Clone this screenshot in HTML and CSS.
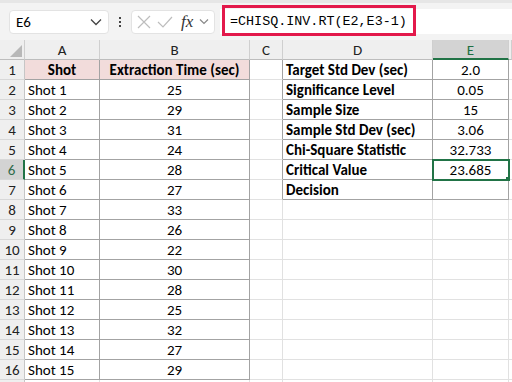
FILE: index.html
```html
<!DOCTYPE html>
<html lang="en">
<head>
<meta charset="utf-8">
<title>Chi-Square Test</title>
<link rel="stylesheet" href="styles.css">
</head>
<body>
  <div class="bar">
    <div class="namebox">
      <span>E6</span>
      <svg class="chev" width="12" height="8" viewBox="0 0 12 8"><path d="M1 1.5 L6 6.5 L11 1.5" fill="none" stroke="#444" stroke-width="1.3"/></svg>
    </div>
    <div class="dots"><i></i><i></i><i></i></div>
    <div class="fxbox">
      <svg width="14" height="14" viewBox="0 0 14 14"><path d="M1 1 L13 13 M13 1 L1 13" stroke="#bdbdbd" stroke-width="1.2"/></svg>
      <svg width="16" height="14" viewBox="0 0 16 14"><path d="M1 7 L6 12 L15 2" fill="none" stroke="#bdbdbd" stroke-width="1.2"/></svg>
      <span class="fx">fx</span>
      <svg width="10" height="7" viewBox="0 0 10 7"><path d="M1 1.5 L5 5.5 L9 1.5" fill="none" stroke="#888" stroke-width="1.2"/></svg>
    </div>
    <div class="formula">
      <span class="ftext">=CHISQ.INV.RT(E2,E3-1)</span>
      <div class="mark"></div>
    </div>
  </div>

  <div class="sheet">
    <div class="h corner"><svg width="12" height="12" viewBox="0 0 12 12"><path d="M12 0 L12 12 L0 12 Z" fill="#b8b8b8"/></svg></div>
    <div class="h">A</div><div class="h">B</div><div class="h">C</div><div class="h">D</div><div class="h sel">E</div><div class="h"></div>

    <div class="r">1</div><div class="c t th">Shot</div><div class="c t th">Extraction Time (sec)</div><div class="c l"></div><div class="c t lb">Target Std Dev (sec)</div><div class="c t mid">2.0</div><div class="c"></div>
    <div class="r">2</div><div class="c t">Shot 1</div><div class="c t mid">25</div><div class="c l"></div><div class="c t lb">Significance Level</div><div class="c t mid">0.05</div><div class="c"></div>
    <div class="r">3</div><div class="c t">Shot 2</div><div class="c t mid">29</div><div class="c l"></div><div class="c t lb">Sample Size</div><div class="c t mid">15</div><div class="c"></div>
    <div class="r">4</div><div class="c t">Shot 3</div><div class="c t mid">31</div><div class="c l"></div><div class="c t lb">Sample Std Dev (sec)</div><div class="c t mid">3.06</div><div class="c"></div>
    <div class="r">5</div><div class="c t">Shot 4</div><div class="c t mid">24</div><div class="c l"></div><div class="c t lb">Chi-Square Statistic</div><div class="c t mid">32.733</div><div class="c"></div>
    <div class="r sel">6</div><div class="c t">Shot 5</div><div class="c t mid">28</div><div class="c l"></div><div class="c t lb">Critical Value</div><div class="c t mid active">23.685</div><div class="c"></div>
    <div class="r">7</div><div class="c t">Shot 6</div><div class="c t mid">27</div><div class="c l"></div><div class="c t lb">Decision</div><div class="c t mid"></div><div class="c"></div>
    <div class="r">8</div><div class="c t">Shot 7</div><div class="c t mid">33</div><div class="c"></div><div class="c"></div><div class="c"></div><div class="c"></div>
    <div class="r">9</div><div class="c t">Shot 8</div><div class="c t mid">26</div><div class="c"></div><div class="c"></div><div class="c"></div><div class="c"></div>
    <div class="r">10</div><div class="c t">Shot 9</div><div class="c t mid">22</div><div class="c"></div><div class="c"></div><div class="c"></div><div class="c"></div>
    <div class="r">11</div><div class="c t">Shot 10</div><div class="c t mid">30</div><div class="c"></div><div class="c"></div><div class="c"></div><div class="c"></div>
    <div class="r">12</div><div class="c t">Shot 11</div><div class="c t mid">28</div><div class="c"></div><div class="c"></div><div class="c"></div><div class="c"></div>
    <div class="r">13</div><div class="c t">Shot 12</div><div class="c t mid">25</div><div class="c"></div><div class="c"></div><div class="c"></div><div class="c"></div>
    <div class="r">14</div><div class="c t">Shot 13</div><div class="c t mid">32</div><div class="c"></div><div class="c"></div><div class="c"></div><div class="c"></div>
    <div class="r">15</div><div class="c t">Shot 14</div><div class="c t mid">27</div><div class="c"></div><div class="c"></div><div class="c"></div><div class="c"></div>
    <div class="r">16</div><div class="c t">Shot 15</div><div class="c t mid">29</div><div class="c"></div><div class="c"></div><div class="c"></div><div class="c"></div>
    <div class="r"></div><div class="c"></div><div class="c"></div><div class="c"></div><div class="c"></div><div class="c"></div><div class="c"></div>
  </div>
</body>
</html>
```

FILE: styles.css
```css
*{
    margin:0;
    padding:0;
    box-sizing:border-box;
}
body{
    background:#fff;
    color:#000;
    font-family:Carlito, "Liberation Sans", Arial, sans-serif;
    font-size:15px;
    width:512px;
    height:382px;
    overflow:hidden;
}
.bar{
    height:40px;
    background:#f3f3f3;
    border-top:3px solid #e6e6e6;
    display:flex;
    align-items:center;
    padding-left:9px;
}
.namebox{
    width:100px;
    height:24px;
    background:#fff;
    border:1px solid #e3e3e3;
    border-radius:4px;
    display:flex;
    align-items:center;
    justify-content:space-between;
    padding:0 6px 0 6px;
    font-size:15px;
}
.dots{
    width:22px;
    display:flex;
    flex-direction:column;
    align-items:center;
    gap:2px;
}
.dots i{
    width:2px;
    height:2px;
    background:#444;
}
.fxbox{
    width:84px;
    height:24px;
    background:#fff;
    border:1px solid #e3e3e3;
    border-radius:4px;
    display:flex;
    align-items:center;
    gap:6px;
    padding-left:5px;
}
.fx{
    font-family:"Liberation Serif", serif;
    font-style:italic;
    font-size:17px;
    color:#333;
    margin-left:2px;
}
.formula{
    position:relative;
    flex:1;
    height:25px;
    margin-left:5px;
    background:#fff;
    display:flex;
    align-items:center;
    padding-left:10px;
}
.ftext{
    font-family:"Liberation Mono", monospace;
    font-size:13.4px;
}
.mark{
    position:absolute;
    left:2px;
    top:-4px;
    width:194px;
    height:31px;
    border:3px solid #e3194b;
}
.sheet{
    display:grid;
    grid-template-columns:25px 75px 150px 33px 150px 76px 3px;
    grid-auto-rows:20px;
}
.h{
    background:#efefef;
    border-right:1px solid #cfcfcf;
    border-bottom:1px solid #bdbdbd;
    text-align:center;
    line-height:19px;
    padding-top:1px;
    color:#222;
}
.h.sel{
    background:#d3d3d3;
    color:#1e6e42;
    border-bottom:2px solid #217346;
}
.corner{
    display:flex;
    align-items:flex-end;
    justify-content:flex-end;
    padding:0 2px 2px 0;
}
.r{
    background:#efefef;
    border-right:1px solid #c6c6c6;
    border-bottom:1px solid #d8d8d8;
    text-align:center;
    line-height:19px;
    padding-top:1px;
    color:#222;
}
.r.sel{
    background:#d3d3d3;
    color:#2f6b4a;
    border-right:2px solid #217346;
}
.c{
    border-right:1px solid #e1e1e1;
    border-bottom:1px solid #e1e1e1;
    line-height:19px;
    padding:1px 3px 0 3px;
    white-space:nowrap;
    overflow:hidden;
}
.c.t{
    border-right-color:#a3a3a3;
    border-bottom-color:#a3a3a3;
}
.c.l{
    border-right-color:#a3a3a3;
}
.th{
    background:#f2dcdb;
    font-weight:bold;
    text-align:center;
}
.lb{
    font-weight:bold;
}
.mid{
    text-align:center;
}
.active{
    position:relative;
    outline:2px solid #217346;
    outline-offset:-1px;
}
.active::after{
    content:"";
    position:absolute;
    right:-4px;
    bottom:-4px;
    width:5px;
    height:5px;
    background:#217346;
    border:1px solid #fff;
}
```
